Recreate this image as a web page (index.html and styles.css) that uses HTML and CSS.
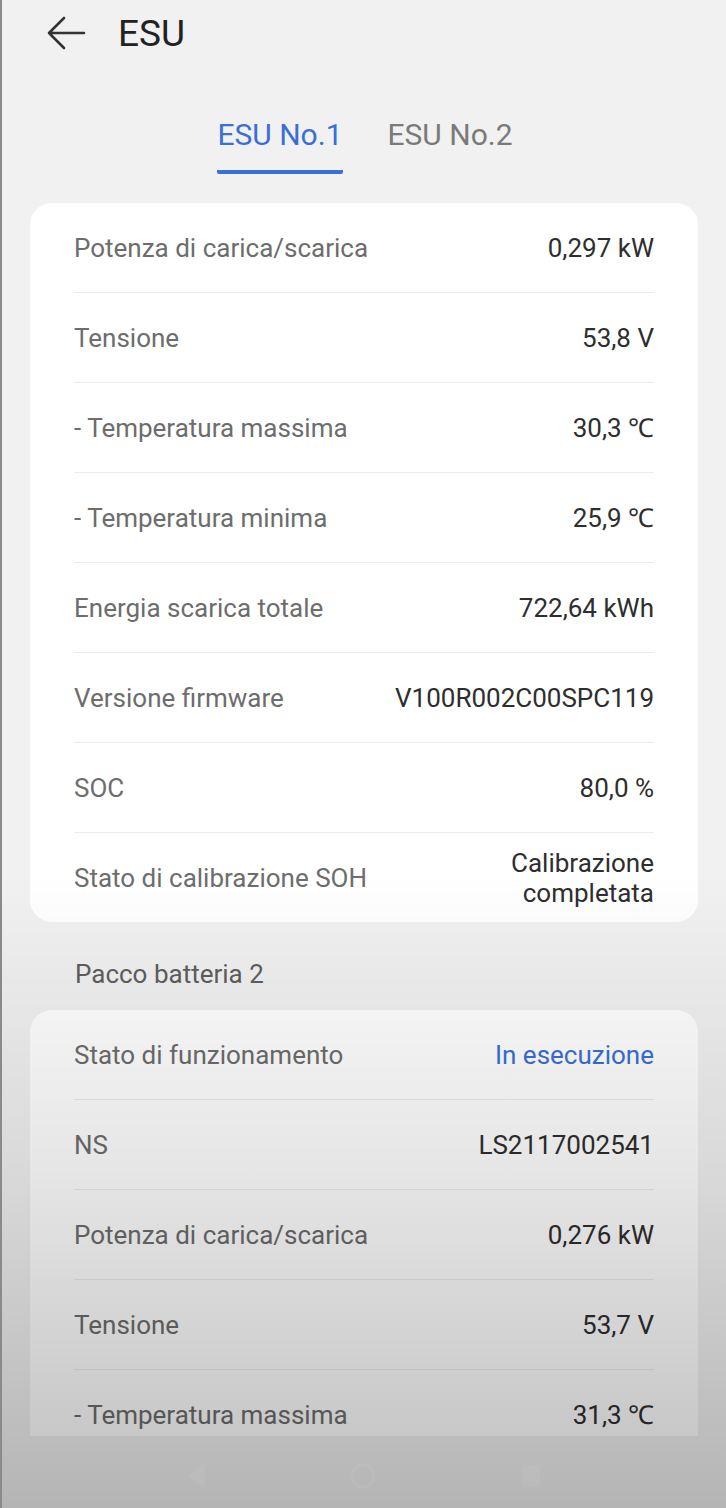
FILE: index.html
```html
<!DOCTYPE html>
<html>
<head>
    <title>ESU</title>
    <link rel="stylesheet" href="styles.css">
</head>
<body>
    <div class="screen">
        <div class="content">
            <div class="header">
                <svg class="back" width="40" height="34" viewBox="0 0 40 34">
                    <path d="M38 17H3M18 2L3 17l15 15" fill="none" stroke="#333" stroke-width="2.6" stroke-linecap="round" stroke-linejoin="round"/>
                </svg>
                <h1>ESU</h1>
            </div>

            <div class="tabs">
                <div class="tab active">ESU No.1</div>
                <div class="tab">ESU No.2</div>
            </div>

            <div class="card">
                <div class="row"><span class="label">Potenza di carica/scarica</span><span class="value">0,297 kW</span></div>
                <div class="row"><span class="label">Tensione</span><span class="value">53,8 V</span></div>
                <div class="row"><span class="label">- Temperatura massima</span><span class="value">30,3 ℃</span></div>
                <div class="row"><span class="label">- Temperatura minima</span><span class="value">25,9 ℃</span></div>
                <div class="row"><span class="label">Energia scarica totale</span><span class="value">722,64 kWh</span></div>
                <div class="row"><span class="label">Versione firmware</span><span class="value">V100R002C00SPC119</span></div>
                <div class="row"><span class="label">SOC</span><span class="value">80,0 %</span></div>
                <div class="row"><span class="label">Stato di calibrazione SOH</span><span class="value">Calibrazione<br>completata</span></div>
            </div>

            <div class="section-title">Pacco batteria 2</div>

            <div class="card">
                <div class="row"><span class="label">Stato di funzionamento</span><span class="value running">In esecuzione</span></div>
                <div class="row"><span class="label">NS</span><span class="value">LS2117002541</span></div>
                <div class="row"><span class="label">Potenza di carica/scarica</span><span class="value">0,276 kW</span></div>
                <div class="row"><span class="label">Tensione</span><span class="value">53,7 V</span></div>
                <div class="row"><span class="label">- Temperatura massima</span><span class="value">31,3 ℃</span></div>
            </div>
        </div>

        <div class="navbar">
            <svg width="24" height="30" viewBox="0 0 24 30"><path d="M20 4L5 15l15 11z" fill="#fff" stroke="#fff" stroke-width="2" stroke-linejoin="round"/></svg>
            <svg width="30" height="30" viewBox="0 0 30 30"><circle cx="15" cy="15" r="11" fill="none" stroke="#fff" stroke-width="3"/></svg>
            <svg width="26" height="30" viewBox="0 0 26 30"><rect x="4" y="4" width="18" height="22" rx="2" fill="#fff"/></svg>
        </div>

        <div class="shade"></div>
    </div>
</body>
</html>
```

FILE: styles.css
```css
body {
    margin: 0;
    font-family: Roboto, "Noto Sans", Arial, sans-serif;
    background-color: #f1f1f1;
}
.screen {
    position: relative;
    height: 1508px;
    display: flex;
    flex-direction: column;
    border-left: 2px solid #8a8a8a;
    background-color: #f1f1f1;
    overflow: hidden;
}
.content {
    flex: 1;
    overflow: hidden;
    padding: 0 28px;
}
.header {
    display: flex;
    align-items: center;
    height: 66px;
    padding-left: 16px;
}
.back {
    margin-right: 32px;
}
.header h1 {
    margin: 0;
    font-size: 37px;
    font-weight: 400;
    color: #222;
}
.tabs {
    display: flex;
    justify-content: center;
    gap: 45px;
    margin-top: 54px;
    margin-bottom: 29px;
    padding-left: 2px;
}
.tab {
    font-size: 30px;
    color: #7a7a7a;
    padding-bottom: 20px;
    border-bottom: 4px solid transparent;
    line-height: 1;
}
.tab.active {
    color: #3a6fd6;
    border-bottom-color: #3a6fd6;
    border-radius: 2px;
}
.card {
    background-color: #fff;
    border-radius: 22px;
    padding: 0 44px;
}
.row {
    display: flex;
    justify-content: space-between;
    align-items: center;
    height: 89px;
    border-bottom: 1px solid #ececec;
    font-size: 26px;
}
.row:last-child {
    border-bottom: none;
}
.label {
    color: #6d6d6d;
}
.value {
    color: #2e2e2e;
    text-align: right;
    line-height: 30px;
}
.value.running {
    color: #3a6fd6;
}
.section-title {
    font-size: 26px;
    color: #5e5e5e;
    padding: 37px 0 21px 45px;
}
.navbar {
    height: 64px;
    display: flex;
    justify-content: center;
    align-items: center;
    gap: 140px;
    padding-top: 8px;
    opacity: 0.3;
}
.shade {
    position: absolute;
    inset: 0;
    pointer-events: none;
    background: linear-gradient(to bottom, rgba(0, 0, 0, 0) 0, rgba(0, 0, 0, 0) 58%, rgba(0, 0, 0, 0.1) 78%, rgba(0, 0, 0, 0.25) 100%);
}
```
